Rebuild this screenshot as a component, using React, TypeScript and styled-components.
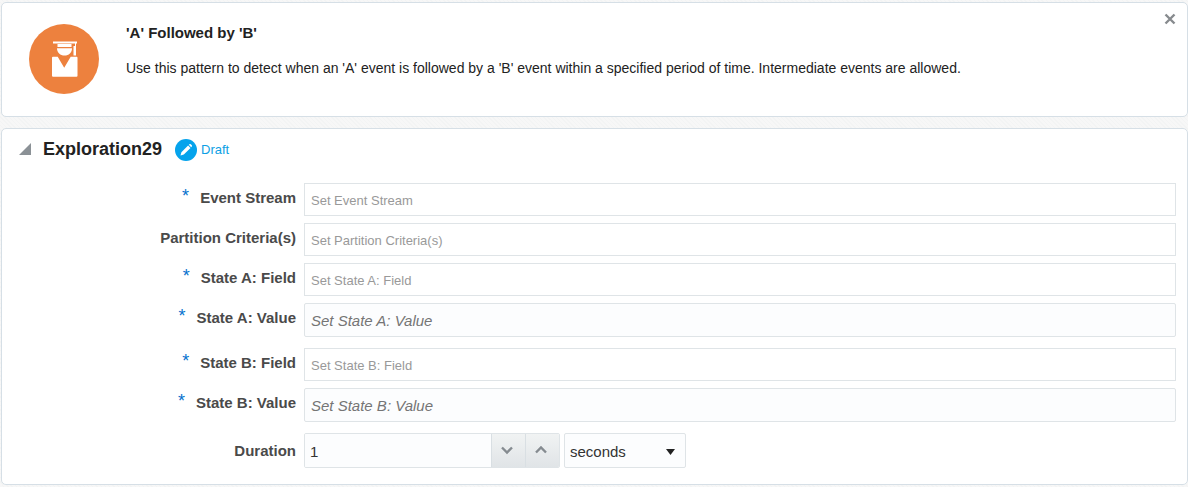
import React, { useId, useState } from "react";
import styled, { createGlobalStyle } from "styled-components";

const GlobalStyle = createGlobalStyle`
  *, *::before, *::after { box-sizing: border-box; }
  body {
    margin: 0;
    font-family: "Liberation Sans", Arial, sans-serif;
    font-size: 14px;
    color: #222;
    background: repeating-linear-gradient(45deg, #f7f7f7 0 2px, #f3f4f4 2px 3px);
  }
  button, input, select { font-family: inherit; }
`;

const Page = styled.main`
  display: flex;
  flex-direction: column;
  gap: 11px;
  padding: 2px 0 0 1px;
`;

const Panel = styled.section`
  background: #fff;
  border: 1px solid #d6dfe6;
  border-radius: 5px;
`;

const InfoPanel = styled(Panel)`
  display: flex;
  align-items: flex-start;
  padding: 21px 11px 22px 27px;
`;

const InfoText = styled.div`
  flex: 1;
  min-width: 0;
  margin-left: 27px;
`;

const InfoTitle = styled.h2`
  margin: 0 0 17px;
  font-size: 15px;
  line-height: 18px;
`;

const InfoDescription = styled.p`
  margin: 0;
  font-size: 14px;
  line-height: 18px;
`;

const IconButton = styled.button`
  display: flex;
  padding: 0;
  border: 0;
  background: none;
  cursor: pointer;
`;

const CloseButton = styled(IconButton)`
  margin-top: -11px;
`;

const FormPanel = styled(Panel)`
  padding: 8px 11px 16px 17px;
`;

const Header = styled.header`
  display: flex;
  align-items: center;
  height: 24px;
`;

const Title = styled.h1`
  margin: 0 13px 0 12px;
  font-size: 18px;
  line-height: 22px;
`;

const Status = styled.span`
  display: flex;
  align-items: center;
  gap: 4px;
  padding-top: 2px;
  font-size: 13px;
  line-height: 22px;
  color: #0d9fe5;
`;

const Fields = styled.form`
  display: flex;
  flex-direction: column;
  gap: 11px;
  margin-top: 22px;
`;

const FieldGroup = styled.div`
  display: flex;
  flex-direction: column;
  gap: 7px;
`;

const Row = styled.div`
  display: grid;
  grid-template-columns: 277px 1fr;
  column-gap: 8px;
  align-items: center;
`;

const Label = styled.label`
  display: flex;
  justify-content: flex-end;
  gap: 11px;
  font-size: 15px;
  line-height: 18px;
  font-weight: bold;
  color: #4a4a4a;
`;

const FieldLabel = styled(Label)`
  padding-bottom: 4px;
`;

const Required = styled.span`
  font-size: 18px;
  line-height: 14px;
  font-weight: normal;
  color: #0572ce;
`;

const TextField = styled.input<{ $expression?: boolean }>`
  width: 100%;
  min-width: 0;
  height: ${(p) => (p.$expression ? 34 : 33)}px;
  padding: 1px 6px 0;
  border: 1px solid #dfe4e7;
  border-radius: ${(p) => (p.$expression ? 2 : 0)}px;
  background: ${(p) => (p.$expression ? "#fcfdfe" : "#fff")};
  font-size: ${(p) => (p.$expression ? 15 : 13)}px;
  color: #333;

  &::placeholder {
    color: ${(p) => (p.$expression ? "#757575" : "#999")};
    font-style: ${(p) => (p.$expression ? "italic" : "normal")};
    opacity: 1;
  }
`;

const DurationControls = styled.div`
  display: flex;
  gap: 4px;
`;

const Spinner = styled.div`
  display: flex;
  width: 256px;
  height: 35px;
  border: 1px solid #dfe4e7;
  border-radius: 2px;
  overflow: hidden;
`;

const SpinnerInput = styled.input`
  flex: 1;
  min-width: 0;
  padding: 1px 5px 0;
  border: 0;
  background: #fcfdfe;
  font-size: 15px;
  color: #333;
`;

const StepButton = styled(IconButton)`
  width: 34px;
  padding: 0 4px 2px 0;
  align-items: center;
  justify-content: center;
  border-left: 1px solid #d9dfe3;
  background: linear-gradient(#f1f3f3, #e0e4e7);
`;

const SelectBox = styled.div`
  display: grid;
  width: 122px;
  height: 35px;
  align-items: center;

  > * { grid-area: 1 / 1; }
  > svg { justify-self: end; margin: 2px 11px 0 0; pointer-events: none; }
`;

const Select = styled.select`
  appearance: none;
  width: 100%;
  height: 100%;
  padding: 2px 24px 0 5px;
  border: 1px solid #dfe4e7;
  border-radius: 2px;
  background: #fcfdfe;
  font-size: 15px;
  color: #333;
`;

function GraduateIcon() {
  return (
    <svg width="70" height="70" viewBox="0 0 70 70" aria-hidden="true">
      <circle cx="35" cy="35" r="35" fill="#ed813e" />
      <path d="M24 17.500h24v2H24zM28.500 20h14v3h-14z" fill="#fff" />
      <path d="M28 24.200h15c0 4.500-3.200 7.300-7.500 7.300s-7.500-2.800-7.500-7.300z" fill="#fff" />
      <path d="M46 19h1v12.500h-2.500V22H46z" fill="#fff" />
      <path d="M24 32.800h4.700l6.500 11 6.500-11H47.500q1 0 1 1v18q0 1-1 1H24q-1 0-1-1v-18q0-1 1-1z" fill="#fff" />
    </svg>
  );
}

function DraftIcon() {
  return (
    <svg width="22" height="22" viewBox="0 0 22 22" aria-hidden="true">
      <circle cx="11" cy="11" r="11" fill="#05a3ec" />
      <path d="M5.500 16.500l.9-3.300 6.700-6.700 2.400 2.400-6.700 6.700zM13.800 5.800l.6-.6q.7-.6 1.400 0l1 1q.6.700 0 1.400l-.6.6z" fill="#fff" />
    </svg>
  );
}

function Chevron({ up = false }: { up?: boolean }) {
  return (
    <svg width="12" height="12" viewBox="0 0 12 12" aria-hidden="true">
      <path d={up ? "M1 8.500l5-5 5 5" : "M1 3.500l5 5 5-5"} fill="none" stroke="#858b90" strokeWidth="2.400" />
    </svg>
  );
}

type FieldRowProps = { label: string; required?: boolean; expression?: boolean };

function FieldRow({ label, required, expression }: FieldRowProps) {
  const id = useId();
  return (
    <Row>
      <FieldLabel htmlFor={id}>
        {required && <Required aria-hidden="true">*</Required>}
        {label}
      </FieldLabel>
      <TextField id={id} type="text" placeholder={`Set ${label}`} required={required} $expression={expression} />
    </Row>
  );
}

export default function App() {
  const [duration, setDuration] = useState(1);

  return (
    <>
      <GlobalStyle />
      <Page>
        <InfoPanel>
          <GraduateIcon />
          <InfoText>
            <InfoTitle>'A' Followed by 'B'</InfoTitle>
            <InfoDescription>
              Use this pattern to detect when an 'A' event is followed by a 'B' event within a specified period of
              time. Intermediate events are allowed.
            </InfoDescription>
          </InfoText>
          <CloseButton type="button" aria-label="Close">
            <svg width="12" height="12" viewBox="0 0 12 12" aria-hidden="true">
              <path d="M1.500 1.500l9 9M10.500 1.500l-9 9" stroke="#878b8e" strokeWidth="2.400" />
            </svg>
          </CloseButton>
        </InfoPanel>

        <FormPanel>
          <Header>
            <IconButton type="button" aria-label="Collapse section" aria-expanded="true">
              <svg width="12" height="12" viewBox="0 0 12 12" aria-hidden="true">
                <path d="M12 0v12H0z" fill="#8b9196" />
              </svg>
            </IconButton>
            <Title>Exploration29</Title>
            <Status>
              <DraftIcon />
              Draft
            </Status>
          </Header>

          <Fields>
            <FieldGroup>
              <FieldRow label="Event Stream" required />
              <FieldRow label="Partition Criteria(s)" />
              <FieldRow label="State A: Field" required />
              <FieldRow label="State A: Value" required expression />
            </FieldGroup>
            <FieldGroup>
              <FieldRow label="State B: Field" required />
              <FieldRow label="State B: Value" required expression />
            </FieldGroup>
            <Row>
              <Label htmlFor="duration">Duration</Label>
              <DurationControls>
                <Spinner>
                  <SpinnerInput
                    id="duration"
                    type="text"
                    inputMode="numeric"
                    value={duration}
                    onChange={(e) => setDuration(Number(e.target.value) || 0)}
                  />
                  <StepButton
                    type="button"
                    aria-label="Decrease duration"
                    onClick={() => setDuration((d) => Math.max(0, d - 1))}
                  >
                    <Chevron />
                  </StepButton>
                  <StepButton type="button" aria-label="Increase duration" onClick={() => setDuration((d) => d + 1)}>
                    <Chevron up />
                  </StepButton>
                </Spinner>
                <SelectBox>
                  <Select aria-label="Duration unit" defaultValue="seconds">
                    <option>seconds</option>
                    <option>minutes</option>
                    <option>hours</option>
                  </Select>
                  <svg width="9" height="6" viewBox="0 0 9 6" aria-hidden="true">
                    <path d="M0 0h9L4.500 6z" fill="#222" />
                  </svg>
                </SelectBox>
              </DurationControls>
            </Row>
          </Fields>
        </FormPanel>
      </Page>
    </>
  );
}
